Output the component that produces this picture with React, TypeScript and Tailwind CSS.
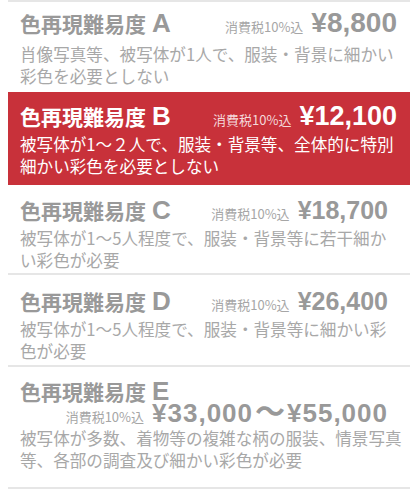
import React from "react";

type Item = {
  letter: string;
  lines: string[];
  active?: boolean;
  priceSize: string;
  priceRight: string;
  stacked?: boolean;
  pad: string;
  descGap: string;
  border?: boolean;
};

const items: Item[] = [
  {
    letter: "A",
    lines: ["肖像写真等、被写体が1人で、服装・背景に細かい", "彩色を必要としない"],
    priceSize: "text-[28px]",
    priceRight: "mr-0",
    pad: "pt-[7px] pb-[5px]",
    descGap: "mt-[6px]",
  },
  {
    letter: "B",
    lines: ["被写体が1～２人で、服装・背景等、全体的に特別", "細かい彩色を必要としない"],
    active: true,
    priceSize: "text-[27px]",
    priceRight: "mr-0",
    pad: "pt-[10px] pb-[8px]",
    descGap: "mt-[3px]",
  },
  {
    letter: "C",
    lines: ["被写体が1～5人程度で、服装・背景等に若干細か", "い彩色が必要"],
    priceSize: "text-[25px]",
    priceRight: "mr-[9px]",
    pad: "pt-[11px] pb-[2px]",
    descGap: "mt-[3px]",
    border: true,
  },
  {
    letter: "D",
    lines: ["被写体が1～5人程度で、服装・背景等に細かい彩", "色が必要"],
    priceSize: "text-[25px]",
    priceRight: "mr-[9px]",
    pad: "pt-[12px] pb-[3px]",
    descGap: "mt-[3px]",
    border: true,
  },
  {
    letter: "E",
    lines: ["被写体が多数、着物等の複雑な柄の服装、情景写真", "等、各部の調査及び細かい彩色が必要"],
    priceSize: "text-[26px]",
    priceRight: "mr-[9px]",
    stacked: true,
    pad: "pt-[10px] pb-[16px]",
    descGap: "mt-[3px]",
    border: true,
  },
];

const prices: Record<string, React.ReactNode> = {
  A: "¥8,800",
  B: "¥12,100",
  C: "¥18,700",
  D: "¥26,400",
  E: (
    <span className="tracking-[1px]">
      ¥33,000
      <span className="mx-[2px] font-['Noto_Sans_CJK_JP',sans-serif] text-[30px] leading-[0px] tracking-normal">～</span>
      ¥55,000
    </span>
  ),
};

const jp = "font-['Noto_Sans_CJK_JP',sans-serif]";
const lat = "font-['Liberation_Sans','Noto_Sans_CJK_JP',sans-serif]";

function Title({ item }: { item: Item }) {
  return (
    <div className="flex h-[28px] items-baseline whitespace-nowrap">
      <span className={`${jp} text-[21px] font-bold leading-[28px]`}>色再現難易度</span>
      <span className={`${lat} ml-[6px] text-[26px] font-bold leading-[28px]`}>{item.letter}</span>
    </div>
  );
}

function Price({ item, lead }: { item: Item; lead: string }) {
  return (
    <div className={`flex items-baseline whitespace-nowrap ${item.priceRight}`}>
      <span
        className={`${jp} text-[13px] leading-none ${item.active ? "text-[#f4d9db]" : "text-[#a6a6a6]"}`}
      >
        消費税10%込
      </span>
      <span className={`${lat} ml-[8px] ${item.priceSize} font-bold ${lead}`}>{prices[item.letter]}</span>
    </div>
  );
}

function Section({ item }: { item: Item }) {
  const color = item.active ? "bg-[#c8313a] text-white" : "text-[#999999]";
  const lineBorder = item.border ? "border-b-2 border-[#e6e6e6]" : "";
  return (
    <div className={`${color} ${lineBorder} pl-[12px] pr-[13px] ${item.pad}`}>
      {item.stacked ? (
        <div className="flex flex-col">
          <Title item={item} />
          <div className="-mt-[3px] flex h-[22px] justify-end">
            <Price item={item} lead="leading-[22px]" />
          </div>
        </div>
      ) : (
        <div className="flex h-[28px] items-start justify-between">
          <Title item={item} />
          <div className="flex h-[28px] items-start">
            <Price item={item} lead="leading-[28px]" />
          </div>
        </div>
      )}
      <div
        className={`${jp} ${item.descGap} text-[16.6px] leading-[22px] whitespace-nowrap ${item.active ? "text-white" : "text-[#a8a8a8]"}`}
      >
        {item.lines.map((l, i) => (
          <div key={i} className="h-[22px]">
            {l}
          </div>
        ))}
      </div>
    </div>
  );
}

export default function App() {
  return (
    <div className="h-[489px] w-[417px] overflow-hidden bg-white">
      <div className="ml-[8px] w-[402px] border-t-2 border-[#e6e6e6]">
        {items.map((it) => (
          <Section key={it.letter} item={it} />
        ))}
      </div>
    </div>
  );
}
